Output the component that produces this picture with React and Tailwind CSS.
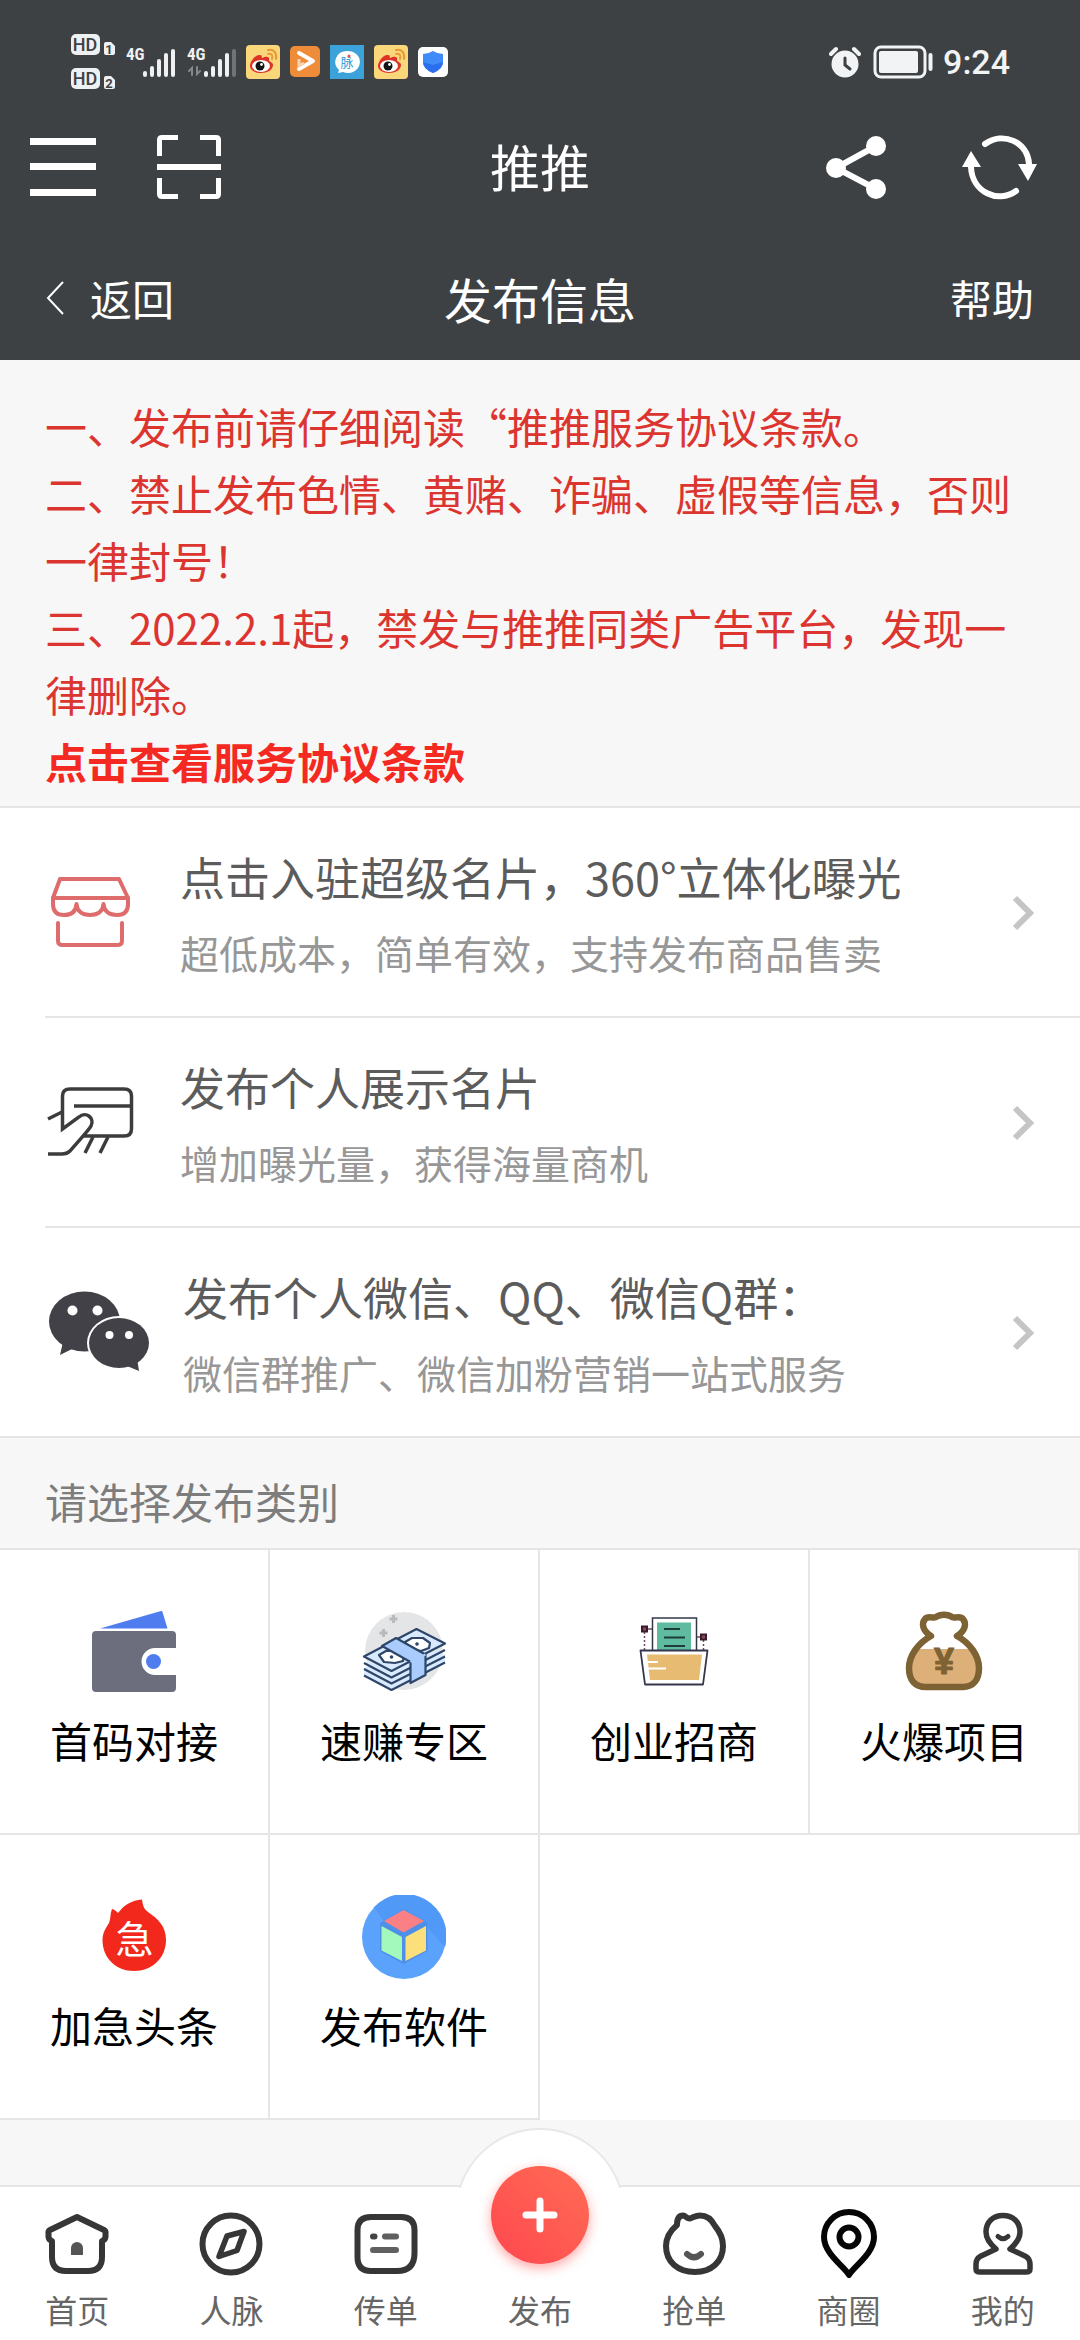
import { useState } from "react";

/* Status bar */

function HdBadge({ sim }) {
  return (
    <svg width="46" height="22" viewBox="0 0 46 22">
      <rect x="1" y="0" width="29" height="21" rx="5" fill="#eef0f2" />
      <text x="15" y="17" textAnchor="middle" fontSize="18" fontWeight="500" fontFamily="Roboto, sans-serif" fill="#3e4144">HD</text>
      <path d="M34 10Q34 8 36 8H41L45 12V19Q45 21 43 21H36Q34 21 34 19Z" fill="#eef0f2" />
      <text x="39" y="20" textAnchor="middle" fontSize="13" fontWeight="700" fontFamily="Roboto, sans-serif" fill="#3e4144">{sim}</text>
    </svg>
  );
}

function Signal({ bars, data }) {
  return (
    <svg width="51" height="44" viewBox="0 -6 51 44" strokeWidth="4" strokeLinecap="round">
      <text x="0" y="14" fontSize="17" fontWeight="700" fontFamily="'Roboto Condensed', 'Liberation Sans Narrow', Roboto, sans-serif" fill="#eef0f2">4G</text>
      {[25, 20, 13, 7, 3].map((top, i) => (
        <path key={top} d={`M${19 + i * 7} ${top + 2}V29`} stroke={i < bars ? "#eef0f2" : "#717477"} />
      ))}
      {data && <path d="M5 29V22L2 25M10 21V28L13 25" stroke="#85888b" strokeWidth="2" fill="none" />}
    </svg>
  );
}

function WeiboIcon() {
  return (
    <svg width="34" height="34" viewBox="0 0 34 34">
      <rect width="34" height="34" rx="4" fill="#fbd77c" />
      <path d="M4 21C4 16 10 9 14 10C17 10 15 13 16 13C20 11 24 11 23 15C23 17 27 17 27 20C27 25 21 28 15 28C9 28 4 25 4 21Z" fill="#dc3326" />
      <ellipse cx="15" cy="21" rx="9" ry="6" fill="#fff" />
      <circle cx="14" cy="21" r="4.5" fill="#141414" />
      <circle cx="15.5" cy="19.5" r="1.4" fill="#fff" />
      <path d="M22 5C28 4 31 8 30 14M22 9C26 8 27 11 26 14" stroke="#e79a35" strokeWidth="2" fill="none" strokeLinecap="round" />
    </svg>
  );
}

function VideoIcon() {
  return (
    <svg width="30" height="32" viewBox="0 0 30 32">
      <rect width="30" height="31" rx="5" fill="#ee8c39" />
      <path d="M9 7L23 15L9 23" stroke="#fff" strokeWidth="4" fill="none" strokeLinecap="round" strokeLinejoin="round" />
      <path d="M9 13V20L14 17" stroke="#fad3ae" strokeWidth="3" fill="none" strokeLinejoin="round" />
    </svg>
  );
}

function MaimaiIcon() {
  return (
    <svg width="34" height="34" viewBox="0 0 34 34">
      <rect width="34" height="34" fill="#3ba2da" />
      <path d="M17 6A12 11 0 1 1 13 27L8 28L9 25A12 11 0 0 1 17 6Z" fill="#fff" />
      <text x="17" y="22" textAnchor="middle" fontSize="13" fontFamily="'Noto Sans CJK SC', sans-serif" fill="#3ba2da">脉</text>
      <circle cx="19" cy="11" r="1.5" fill="#e2554c" />
    </svg>
  );
}

function ShieldIcon() {
  return (
    <svg width="30" height="30" viewBox="0 0 30 30">
      <rect width="30" height="30" rx="5" fill="#fff" />
      <path d="M15 4Q20 7 25 7V15Q25 22 15 26Q5 22 5 15V7Q10 7 15 4Z" fill="#3f8cf8" />
      <path d="M5 15L15 18L25 15Q25 22 15 26Q5 22 5 15Z" fill="#2b6ff0" />
    </svg>
  );
}

function StatusBar() {
  return (
    <div className="flex items-center justify-between pt-[34px] pr-[70px] pb-8 pl-[70px]">
      <div className="flex items-center">
        <div className="flex flex-col gap-3">
          <HdBadge sim="1" />
          <HdBadge sim="2" />
        </div>
        <div className="ml-[10px] flex items-center gap-[10px]">
          <Signal bars={5} />
          <Signal bars={4} data />
        </div>
        <div className="ml-2 flex items-center gap-[10px]">
          <WeiboIcon />
          <VideoIcon />
          <MaimaiIcon />
          <WeiboIcon />
          <ShieldIcon />
        </div>
      </div>
      <div className="flex items-center">
        <svg width="32" height="32" viewBox="0 0 32 32">
          <circle cx="16" cy="18" r="13.5" fill="#f1f3f4" />
          <path d="M2 8L7 3M30 8L25 3" stroke="#f1f3f4" strokeWidth="4" strokeLinecap="round" />
          <path d="M16 12V19L21 23" stroke="#3e4144" strokeWidth="3" fill="none" strokeLinecap="round" />
        </svg>
        <svg className="ml-3" width="62" height="34" viewBox="0 0 62 34">
          <rect x="2" y="2" width="50" height="30" rx="6" fill="none" stroke="#f1f3f4" strokeWidth="3" />
          <rect x="6" y="6" width="39" height="22" rx="2" fill="#f1f3f4" />
          <path d="M57.500 10V24" stroke="#f1f3f4" strokeWidth="4" strokeLinecap="round" />
        </svg>
        <span className="ml-2 font-[Roboto,sans-serif] text-[34px] leading-[40px] font-medium text-[#f1f3f4]">9:24</span>
      </div>
    </div>
  );
}

/* Header */

function Header() {
  return (
    <header className="bg-[#3e4144] text-white">
      <StatusBar />
      <div className="grid grid-cols-[1fr_auto_1fr] items-center px-[30px] pt-2 pb-8">
        <div className="flex items-center gap-[61px]">
          <button aria-label="菜单">
            <svg width="66" height="66" viewBox="0 0 66 66" fill="#fff">
              <path d="M0 4H66V11H0ZM0 29H66V36H0ZM0 55H66V62H0Z" />
            </svg>
          </button>
          <button aria-label="扫一扫">
            <svg width="64" height="66" viewBox="0 0 64 66" fill="none" stroke="#fff" strokeWidth="5">
              <path d="M2.500 22V6Q2.500 3.500 5 3.500H21M43 3.500H59Q61.500 3.500 61.500 6V22M2.500 44V60Q2.500 62.500 5 62.500H21M43 62.500H59Q61.500 62.500 61.500 60V44" />
              <path d="M0 33H64" strokeWidth="6" />
            </svg>
          </button>
        </div>
        <h1 className="pb-1 text-[50px] leading-[70px]">推推</h1>
        <div className="flex items-center justify-end gap-[74px] pr-3">
          <button aria-label="分享">
            <svg width="61" height="66" viewBox="0 0 61 66" fill="#fff">
              <path d="M50 12L10 34L50 55" fill="none" stroke="#fff" strokeWidth="6" />
              <circle cx="10" cy="34" r="10" />
              <circle cx="50" cy="12" r="10" />
              <circle cx="50" cy="55" r="10" />
            </svg>
          </button>
          <button aria-label="刷新">
            <svg width="77" height="66" viewBox="0 0 77 66" fill="none" stroke="#fff" strokeWidth="6" strokeLinecap="round">
              <path d="M24 10C42 -3 67 8 68 30" />
              <path d="M55 57C37 70 11 58 10 33" />
              <path d="M57 30H76L67 47ZM1 33H20L10 17Z" fill="#fff" stroke="none" />
            </svg>
          </button>
        </div>
      </div>
      <div className="grid grid-cols-[1fr_auto_1fr] items-center px-[46px] py-[26px]">
        <button className="flex items-center gap-[26px] text-[42px] leading-[62px]">
          <svg width="18" height="34" viewBox="0 0 18 34" fill="none" stroke="#fff" strokeWidth="2">
            <path d="M17 1L2 17L17 33" />
          </svg>
          返回
        </button>
        <h2 className="text-[48px] leading-[72px]">发布信息</h2>
        <a href="#help" className="justify-self-end text-[42px] leading-[62px]">帮助</a>
      </div>
    </header>
  );
}

/* Entry list icons */

function ShopIcon() {
  return (
    <svg className="mr-[45px] shrink-0" width="90" height="90" viewBox="0 0 90 90" fill="none" stroke="#de6c6c" strokeWidth="4" strokeLinecap="round" strokeLinejoin="round">
      <path d="M8 30L15 11H74L83 30" />
      <path d="M8 30H83V36C83 44 79 47 72 47C64 47 59 43 58.500 36C58 43 53 47 45 47C37 47 32 43 31.500 36C31 43 27 47 19 47C12 47 8 44 8 36Z" />
      <path d="M13 55V73Q13 77 18 77H72Q77 77 77 73V55" />
    </svg>
  );
}

function CardIcon() {
  return (
    <svg className="mr-[45px] shrink-0" width="90" height="90" viewBox="0 0 90 90" fill="none" stroke="#3c3c3e" strokeWidth="3.500">
      <path d="M39 58H79Q86.500 58 86.500 51V18Q86.500 11 79 11H25Q17.500 11 17.500 18V51L34 39C41 33 50 40 46 48C44 52 30 67 25 73Q22 76 17 76H3" />
      <path d="M29 28H86M3 41L17 34M48 59L40 75M63 59L55 75" />
    </svg>
  );
}

function WechatIcon() {
  return (
    <svg className="mr-[30px] shrink-0" width="108" height="90" viewBox="0 0 108 90" fill="#424147">
      <ellipse cx="39.500" cy="33.500" rx="35.500" ry="30" />
      <path d="M18 54L15 67L29 60Z" />
      <ellipse cx="74" cy="55" rx="32" ry="27" fill="#fff" />
      <ellipse cx="74" cy="55" rx="30" ry="25" />
      <path d="M82 78L94 83L92 70Z" />
      <g fill="#fff">
        <circle cx="27.500" cy="22.500" r="5" />
        <circle cx="52.500" cy="22.500" r="5" />
        <circle cx="64.500" cy="47" r="4" />
        <circle cx="84" cy="47" r="4" />
      </g>
    </svg>
  );
}

const entries = [
  { title: "点击入驻超级名片，360°立体化曝光", desc: "超低成本，简单有效，支持发布商品售卖", icon: <ShopIcon /> },
  { title: "发布个人展示名片", desc: "增加曝光量，获得海量商机", icon: <CardIcon /> },
  { title: "发布个人微信、QQ、微信Q群：", desc: "微信群推广、微信加粉营销一站式服务", icon: <WechatIcon /> },
];

function EntryList() {
  return (
    <ul className="border-y-2 border-[#e5e5e5] bg-white pl-[45px]">
      {entries.map((entry) => (
        <li key={entry.title} className="border-b-2 border-[#e5e5e5] last:border-b-0">
          <a href="#entry" className="flex items-center pt-[30px] pr-[45px] pb-7">
            {entry.icon}
            <span className="min-w-0 flex-1">
              <span className="block text-[45px] leading-[78px] text-[#5c5c5c]">{entry.title}</span>
              <span className="block text-[39px] leading-[72px] text-[#979797]">{entry.desc}</span>
            </span>
            <svg width="23" height="36" viewBox="0 0 23 36" fill="none" stroke="#c5c5c5" strokeWidth="6">
              <path d="M3 3L18 18L3 33" />
            </svg>
          </a>
        </li>
      ))}
    </ul>
  );
}

/* Category icons */

function WalletIcon() {
  return (
    <svg width="84" height="84" viewBox="0 0 84 84">
      <path d="M8 18.500L69 1Q70 0.500 70.500 2L75.500 18.500Z" fill="#4f7df0" />
      <path d="M4 21H80Q84 21 84 25V38H63A13.500 13.500 0 0 0 63 65H84V78Q84 82 80 82H4Q0 82 0 78V25Q0 21 4 21Z" fill="#6c6e7e" />
      <circle cx="61.500" cy="51.500" r="7.500" fill="#4f7df0" />
    </svg>
  );
}

function CashIcon() {
  return (
    <svg width="84" height="84" viewBox="0 0 84 84" strokeLinejoin="round">
      <circle cx="42" cy="41" r="39" fill="#e4e5e6" />
      <path d="M31.500 5V13M27.500 9H35.500M21.500 19V27M17.500 23H25.500" stroke="#b9babc" strokeWidth="3" />
      <g fill="#d9eaff" stroke="#2d4669" strokeWidth="2.200">
        <path d="M2 65L29.500 80L83 52.500V45L54 38L2 58Z" stroke="none" />
        <path d="M2 65.500L29.500 80L83 52.500M2 59L29.500 73.500L83 46.500M2 53L29.500 67.500L83 40" />
        <path d="M2 46.500L54.500 19L83 33.500L29.500 61Z" />
        <path d="M17 45L24 41L35 41L42 46L41 51L33 53L22 52ZM43 32L50 28H61L68 33L67 38L59 41L48 39Z" fill="#fff" />
        <path d="M20 36L34 28L63.500 44.500V65L48.500 73V52Z" fill="#a9ccfc" />
        <path d="M48.500 52L63.500 44.500" stroke="#a9ccfc" />
      </g>
      <circle cx="29.500" cy="47" r="1.800" fill="#2d4669" />
      <circle cx="55" cy="34" r="1.800" fill="#2d4669" />
    </svg>
  );
}

function FolderIcon() {
  return (
    <svg width="84" height="84" viewBox="0 0 84 84" fill="none">
      <rect x="20.500" y="8" width="44" height="33" fill="#fff" stroke="#34364b" strokeWidth="1.500" />
      <rect x="25" y="12.500" width="34" height="28" fill="#5ebb9f" />
      <path d="M32 19H48M32 27.500H53M32 36H53" stroke="#1e3c3b" strokeWidth="1.800" />
      <path d="M12.500 22V40M71.500 30V40" stroke="#6e4a5c" strokeWidth="1.500" strokeDasharray="2 2" />
      <path d="M15 19H20M65 27H69" stroke="#6e4a5c" strokeWidth="1.500" />
      <path d="M10 16.500H15V21.500H10ZM69 24.500H74V29.500H69Z" fill="#8b4a63" stroke="#3a1a2b" strokeWidth="2" />
      <path d="M8.500 40.500H75.500L71 74.500H13Z" fill="#fff" stroke="#34364b" strokeWidth="1.800" strokeLinejoin="round" />
      <path d="M15 44.500H70L67 70H18Z" fill="#e8bb72" />
      <path d="M15 52H26M16 58.500H34" stroke="#fff" strokeWidth="1.800" />
    </svg>
  );
}

function BagIcon() {
  return (
    <svg width="84" height="84" viewBox="0 0 84 84">
      <path d="M14 39H70C75 46 77 52 77 58C77 70 71 77 61 77H24C13 77 7 70 7 58C7 52 9 46 14 39Z" fill="#deb079" />
      <path d="M29 26C21 21 19 14 23 9C26 5 31 9 34 7C38 4 46 4 50 7C53 9 58 5 61 9C65 14 63 21 55 26C68 33 77 46 77 58C77 70 71 77 61 77H24C13 77 7 70 7 58C7 46 16 33 29 26Z" fill="none" stroke="#7d6233" strokeWidth="6.500" strokeLinejoin="round" />
      <text x="42" y="64" textAnchor="middle" fontSize="36" fontWeight="700" fontFamily="'Liberation Sans', sans-serif" fill="#7d6233" stroke="#7d6233" strokeWidth="1" strokeLinejoin="round">¥</text>
    </svg>
  );
}

function UrgentIcon() {
  return (
    <svg width="84" height="84" viewBox="0 0 84 84">
      <path d="M50 4.500C51 10 51 13 56 17C66 24 74 31 74 45C74 63 60 76 42 76C24 76 10.500 63 10.500 45C10.500 37 14 33 17 28C19 23 18 18 20 14Q22 14 26 18C32 10 40 5 50 4.500Z" fill="#f3281d" />
      <text x="42.500" y="58" textAnchor="middle" fontSize="38" fontFamily="'Noto Sans CJK SC', sans-serif" fill="#fff">急</text>
    </svg>
  );
}

function CubeIcon() {
  return (
    <svg width="84" height="84" viewBox="0 0 84 84">
      <circle cx="42" cy="42" r="42" fill="#5ba2fc" />
      <path d="M22 26L12 12A42 42 0 0 1 83 52L64 31Z" fill="#5099f7" />
      <path d="M18 28L41.500 14L65.500 28V56L41.500 69L18 56Z" fill="#4e90e8" />
      <path d="M22 26L41.500 15L62 26L41.500 37.500Z" fill="#fb8085" />
      <path d="M19.500 31L40 42V66L19.500 55.500Z" fill="#a2f9bb" />
      <path d="M43.500 42L64 31V55.500L43.500 66Z" fill="#fbdf7b" />
    </svg>
  );
}

const categories = [
  { name: "首码对接", icon: <WalletIcon /> },
  { name: "速赚专区", icon: <CashIcon /> },
  { name: "创业招商", icon: <FolderIcon /> },
  { name: "火爆项目", icon: <BagIcon /> },
  { name: "加急头条", icon: <UrgentIcon /> },
  { name: "发布软件", icon: <CubeIcon /> },
];

/* Tab bar icons */

function TabSvg({ children, stroke = "#363636" }) {
  return (
    <svg className="overflow-visible" width="64" height="64" viewBox="0 0 64 64" fill="none" stroke={stroke} strokeWidth="6" strokeLinecap="round" strokeLinejoin="round">
      {children}
    </svg>
  );
}

const tabs = [
  {
    name: "首页",
    icon: (
      <TabSvg>
        <path d="M32 5L59 18Q61 19 60.500 22V25Q60 28 57 29V45Q57 59 43 59H21Q7 59 7 45V29Q4 28 3.500 25V22Q3 19 5 18Z" />
        <path d="M26 43V36A6 6 0 0 1 38 36V43Z" fill="#555" stroke="none" />
      </TabSvg>
    ),
  },
  {
    name: "人脉",
    icon: (
      <TabSvg>
        <circle cx="32" cy="32" r="28.500" />
        <path d="M45 19.500L28 24L20 44.500L38 38.500Z" strokeWidth="5.500" />
      </TabSvg>
    ),
  },
  {
    name: "传单",
    icon: (
      <TabSvg>
        <path d="M17 5H47Q60.500 5 60.500 18V41Q60.500 59 43 59H17Q3.500 59 3.500 45V18Q3.500 5 17 5Z" />
        <path d="M19 24.500H20.500" stroke="#444" />
        <path d="M31 24.500H42M19 38H42" stroke="#606060" />
      </TabSvg>
    ),
  },
  { name: "发布" },
  {
    name: "抢单",
    icon: (
      <TabSvg>
        <path d="M15 13C15 7 17 3.500 21 3.500C24 3.500 24 7 28 6.500C32 5 34 3.500 38 3.500C46 3.500 50 8 53 14C58 20 61 26 61 34C61 50 49 60 33 60C16 60 4 50 4 34C4 25 8 19 15 13Z" />
        <path d="M25 42Q32 48.500 39 42" stroke="#555" />
      </TabSvg>
    ),
  },
  {
    name: "商圈",
    icon: (
      <TabSvg stroke="#050505">
        <path d="M32 63C28 55 7 42 7 25A25 25 0 0 1 57 25C57 42 36 55 32 63Z" />
        <circle cx="32" cy="25" r="9.500" />
      </TabSvg>
    ),
  },
  {
    name: "我的",
    icon: (
      <TabSvg>
        <path d="M25 37C18 31 15 26 15 20C15 10 22 3.500 32 3.500C42 3.500 49 10 49 20C49 26 46 31 39 37L55 44.500Q59 47 59 52V57Q59 60 55 60H9Q5 60 5 57V52Q5 47 9 44.500Z" strokeWidth="5.500" strokeLinejoin="round" />
        <path d="M27 24.500Q32 29 37 24.500" strokeWidth="5" />
      </TabSvg>
    ),
  },
];

function TabBar({ active, onSelect }) {
  return (
    <nav className="relative mt-auto border-t-2 border-[#e5e5e5] bg-white">
      {/* bump behind the publish button */}
      <div className="absolute -top-[59px] left-1/2 h-[60px] w-[170px] -translate-x-1/2 overflow-hidden">
        <div className="h-[170px] rounded-full border-2 border-[#e8e8e8] bg-white" />
      </div>
      <div className="relative flex h-[153px] items-end pb-[6px]">
        {tabs.map((tab) => (
          <button
            key={tab.name}
            aria-current={active === tab.name ? "page" : undefined}
            onClick={() => onSelect(tab.name)}
            className="flex flex-1 flex-col items-center"
          >
            {tab.icon || (
              <span className="mb-3 flex size-[98px] items-center justify-center rounded-full bg-linear-to-tr from-[#ff464f] to-[#ff6b54] shadow-[0_4px_12px_rgba(255,80,80,0.5)]">
                <svg width="36" height="36" viewBox="0 0 36 36" stroke="#fff" strokeWidth="7" strokeLinecap="round">
                  <path d="M18 4V32M4 18H32" />
                </svg>
              </span>
            )}
            <span className="mt-2 text-[32px] leading-[50px] text-[#666]">{tab.name}</span>
          </button>
        ))}
      </div>
    </nav>
  );
}

function App() {
  const [activeTab, setActiveTab] = useState("发布");

  return (
    <div lang="zh-CN" className="flex min-h-screen flex-col bg-[#f7f7f7] font-['Noto_Sans_CJK_SC',sans-serif]">
      <Header />

      {/* Rules */}
      <section className="px-[45px] pt-8 pb-3 text-[42px] leading-[67px] text-[#dc3530]">
        <p>一、发布前请仔细阅读“推推服务协议条款。</p>
        <p>二、禁止发布色情、黄赌、诈骗、虚假等信息，否则一律封号！</p>
        <p>三、2022.2.1起，禁发与推推同类广告平台，发现一律删除。</p>
        <a href="#terms" className="block font-bold text-[#f42a22]">点击查看服务协议条款</a>
      </section>

      <EntryList />

      {/* Categories */}
      <h3 className="px-[45px] pt-[31px] pb-[15px] text-[42px] leading-[64px] text-[#7d7d7d]">请选择发布类别</h3>
      <div className="grid grid-cols-4 border-t-2 border-[#e5e5e5] bg-white">
        {categories.map((category) => (
          <a
            key={category.name}
            href="#category"
            className="flex flex-col items-center border-r-2 border-b-2 border-[#e5e5e5] pt-[60px] pb-[61px]"
          >
            {category.icon}
            <span className="mt-[14px] text-[42px] leading-[64px] text-black">{category.name}</span>
          </a>
        ))}
      </div>

      <TabBar active={activeTab} onSelect={setActiveTab} />
    </div>
  );
}

export default App;
